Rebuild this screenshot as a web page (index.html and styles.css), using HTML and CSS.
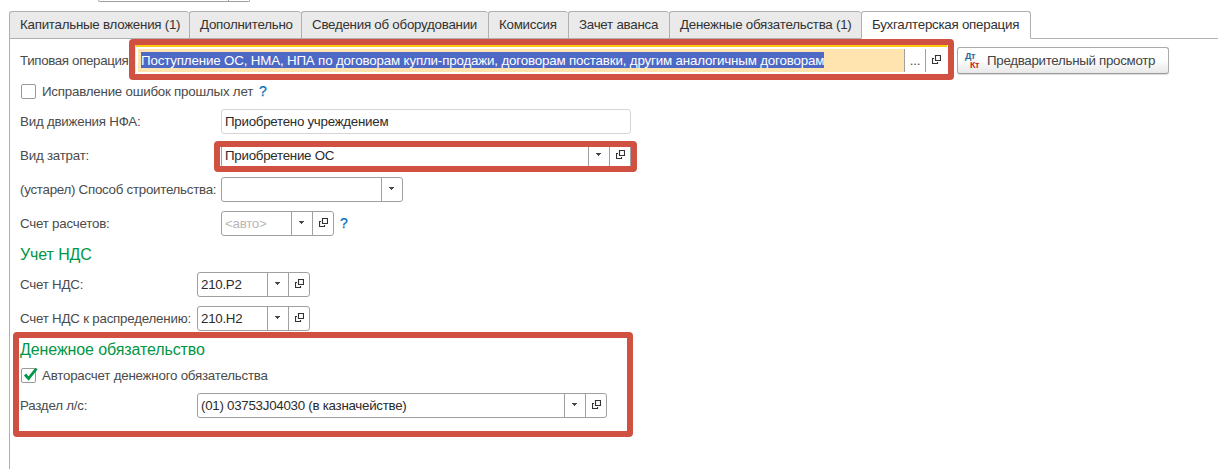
FILE: index.html
```html
<!DOCTYPE html>
<html lang="ru">
<head>
<meta charset="utf-8">
<title>Бухгалтерская операция</title>
<link rel="stylesheet" href="styles.css">
</head>
<body>
<svg class="defs" aria-hidden="true">
  <symbol id="open" viewBox="0 0 9 9"><path d="M3.500.500h5v5h-5zM2 3.500h-1.500v5h5v-1.500" fill="none" stroke="#333" stroke-width="1.150"/></symbol>
  <symbol id="down" viewBox="0 0 5 3"><path d="M0 0h5v1H4v1H3v1H2V2H1V1H0z" fill="#484848"/></symbol>
</svg>
<div class="stub"><i></i></div>
<nav class="tabs">
  <div class="tab t1"><span>Капитальные вложения (1)</span></div>
  <div class="tab t2"><span>Дополнительно</span></div>
  <div class="tab t3"><span>Сведения об оборудовании</span></div>
  <div class="tab t4"><span>Комиссия</span></div>
  <div class="tab t5"><span>Зачет аванса</span></div>
  <div class="tab t6"><span>Денежные обязательства (1)</span></div>
  <div class="tab t7 active"><span>Бухгалтерская операция</span></div>
</nav>
<main class="panel">
  <div class="row operation">
    <label class="label">Типовая операция</label>
    <div class="focus">
      <div class="focus-text"><span class="selected">Поступление ОС, НМА, НПА по договорам купли-продажи, договорам поставки, другим аналогичным договорам</span></div>
      <div class="btn dots">...</div>
      <div class="btn"><svg class="open"><use href="#open"/></svg></div>
    </div>
    <button class="preview"><span class="dtkt"><b class="dt">Дт</b><b class="kt">Кт</b></span><span class="preview-text">Предварительный просмотр</span></button>
  </div>
  <div class="row check first"><span class="box"></span><span class="fix">Исправление ошибок прошлых лет</span><span class="help">?</span></div>
  <div class="row"><label class="label wide">Вид движения НФА:</label><div class="field full readonly"><span class="value">Приобретено учреждением</span></div></div>
  <div class="row"><label class="label wide">Вид затрат:</label><div class="field full"><span class="value">Приобретение ОС</span><div class="btn"><svg class="down"><use href="#down"/></svg></div><div class="btn"><svg class="open"><use href="#open"/></svg></div></div></div>
  <div class="row"><label class="label wide method">(устарел) Способ строительства:</label><div class="field mid"><span class="value"></span><div class="btn"><svg class="down"><use href="#down"/></svg></div></div></div>
  <div class="row"><label class="label wide">Счет расчетов:</label><div class="field small"><span class="value hint">&lt;авто&gt;</span><div class="btn"><svg class="down"><use href="#down"/></svg></div><div class="btn"><svg class="open"><use href="#open"/></svg></div></div><span class="help">?</span></div>
  <h2 class="title vat">Учет НДС</h2>
  <div class="row"><label class="label narrow">Счет НДС:</label><div class="field small"><span class="value">210.Р2</span><div class="btn"><svg class="down"><use href="#down"/></svg></div><div class="btn"><svg class="open"><use href="#open"/></svg></div></div></div>
  <div class="row"><label class="label narrow">Счет НДС к распределению:</label><div class="field small"><span class="value">210.Н2</span><div class="btn"><svg class="down"><use href="#down"/></svg></div><div class="btn"><svg class="open"><use href="#open"/></svg></div></div></div>
  <h2 class="title money">Денежное обязательство</h2>
  <div class="row check second"><span class="box"><svg class="tick" viewBox="0 0 16 16"><path d="M3 6.500L6.500 10.500L14.500.500" fill="none" stroke="#009646" stroke-width="2.800"/></svg></span><span class="auto">Авторасчет денежного обязательства</span></div>
  <div class="row"><label class="label narrow">Раздел л/с:</label><div class="field full"><span class="value">(01) 03753J04030 (в казначействе)</span><div class="btn"><svg class="down"><use href="#down"/></svg></div><div class="btn"><svg class="open"><use href="#open"/></svg></div></div></div>
</main>
<div class="mark mark-operation"></div>
<div class="mark mark-cost"></div>
<div class="mark mark-money"></div>
</body>
</html>
```
FILE: styles.css
```css
* { box-sizing: border-box; }
body { margin: 0; width: 1218px; height: 469px; overflow: hidden; position: relative; background: #fff; color: #4b4b4b; font: 13.33px/16px "Liberation Sans", Arial, sans-serif; letter-spacing: -.22px; white-space: nowrap; }
.defs { position: absolute; width: 0; height: 0; }
.stub { margin-left: 98px; width: 152px; height: 2px; border: 1px solid #a0a0a0; border-top: 0; border-radius: 0 0 3px 3px; }
.stub i { display: block; margin-left: 129px; width: 1px; height: 1px; background: #a0a0a0; }
.tabs { display: flex; height: 37px; padding: 9px 0 0 9px; background: linear-gradient(#b0b0b0, #b0b0b0) 9px 100% / 100% 1px no-repeat; letter-spacing: -.25px; }
.tab { height: 28px; border: 1px solid #b0b0b0; border-right: 0; border-radius: 3px 3px 0 0; background: #eaeaea; padding: 5px 0 0 10px; color: #333; }
.t1 { width: 180px; } .t2 { width: 112px; } .t3 { width: 187px; } .t4 { width: 80px; } .t5 { width: 101px; } .t6 { width: 192px; }
.t7 { width: 170px; }
.tab.active { background: #fff; border-right: 1px solid #b0b0b0; border-bottom-color: #fff; }
.panel { height: 430px; margin-left: 9px; border-left: 1px solid #b0b0b0; padding: 8px 0 0 10px; }
.row { display: flex; height: 25px; margin-bottom: 9px; align-items: center; }
.label { flex: none; }
.wide { width: 201px; }
.method { letter-spacing: -.27px; }
.narrow { width: 177px; }
.operation { height: 27px; margin-bottom: 10px; }
.operation .label { width: 115px; letter-spacing: -.35px; }
.focus { align-self: flex-start; width: 812px; height: 28px; display: flex; border-top: 2px solid #ffc814; border-left: 1px solid #ffe49a; padding: 2px 0 2px 2px; margin: -2px 10px 0 0; }
.focus-text { width: 766px; height: 23px; background: #ffe4b0; padding: 3px; }
.selected { display: block; width: 683px; height: 16px; line-height: 18px; background: #4e69c5; color: #fff; letter-spacing: -.16px; }
.btn { flex: none; width: 21px; align-self: stretch; border-left: 1px solid #a0a0a0; display: flex; align-items: center; justify-content: center; }
.focus .btn { height: 23px; }
.dots { letter-spacing: -.2px; }
.open { width: 9px; height: 9px; margin: -2px 0 0 1px; overflow: visible; }
.down { width: 5px; height: 3px; margin: -2px 1px 0 0; }
.preview { width: 212px; height: 27px; display: flex; padding: 0 0 0 7px; border: 1px solid #aaa; border-bottom-color: #999; border-radius: 3px; background: linear-gradient(#fff 45%, #e8e8e8); font: inherit; color: #444; align-items: center; box-shadow: 0 1px 1px #ddd; }
.preview-text { letter-spacing: -.3px; }
.dtkt { flex: none; width: 22px; height: 18px; font: bold 9px/9px "Liberation Sans", Arial, sans-serif; letter-spacing: -.5px; text-align: left; }
.dt, .kt { display: block; }
.dt { color: #286496; } .kt { color: #d01c10; padding-left: 5px; }
.check { height: 15px; }
.first { margin-bottom: 10px; }
.second { margin-bottom: 10px; }
.box { width: 15px; height: 15px; margin: 0 6px 0 1px; border: 1px solid #999; border-radius: 2px; }
.tick { display: block; width: 16px; height: 16px; margin: -1px 0 0 0; overflow: visible; }
.help { color: #0070b8; font-size: 14px; -webkit-text-stroke: .25px #0070b8; margin: -2px 0 0 6px; }
.field { height: 25px; display: flex; border: 1px solid #a0a0a0; border-radius: 3px; color: #2b2b2b; letter-spacing: -.27px; }
.readonly { border-color: #d5d5d5; }
.full { width: 410px; } .mid { width: 182px; } .small { width: 113px; }
.value { flex: 1; padding: 4px 0 0 3px; }
.hint { color: #b8b8b8; }
.title { margin: 0; font-size: 16px; line-height: 20px; font-weight: normal; color: #009646; letter-spacing: -.1px; }
.vat { margin-bottom: 7px; }
.money { margin-bottom: 8px; }
.mark { position: absolute; border: 6px solid #d05042; border-radius: 4px; }
.mark-operation { left: 129px; top: 39px; width: 825px; height: 41px; }
.mark-cost { left: 214px; top: 141px; width: 423px; height: 31px; }
.mark-money { left: 13px; top: 332px; width: 620px; height: 105px; }
```
